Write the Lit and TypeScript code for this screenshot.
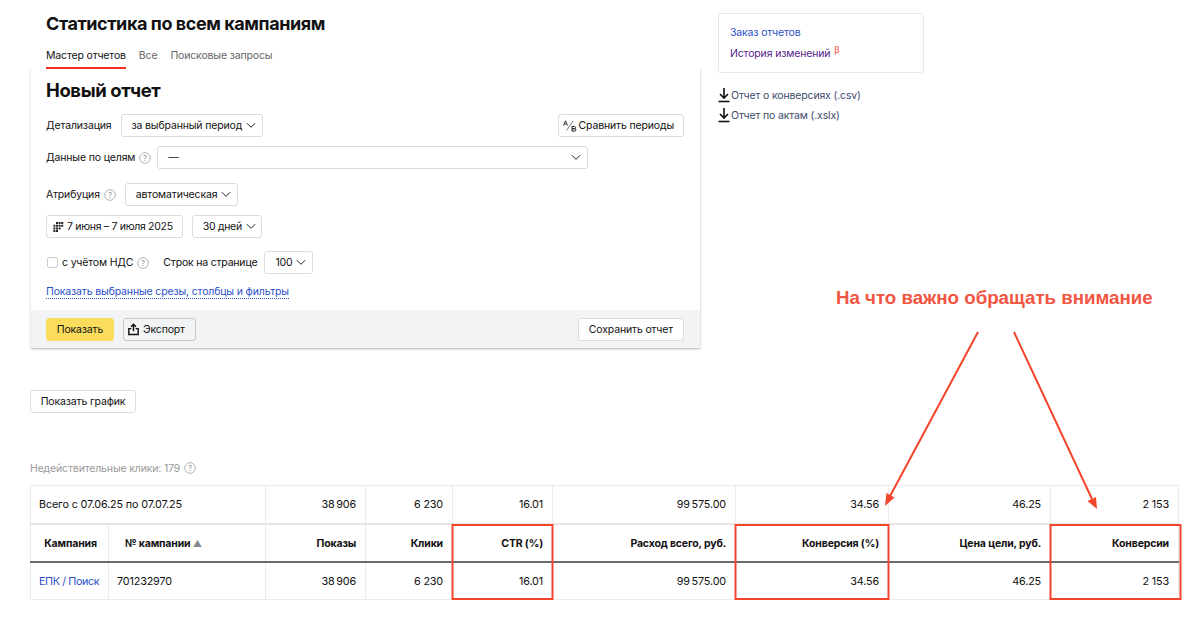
import { LitElement, html, css, svg } from "lit";
import { customElement } from "lit/decorators.js";

const chevron = html`<svg class="chev" viewBox="0 0 12 8" width="10" height="7"><path d="M1 1.2l5 5 5-5" fill="none" stroke="#222" stroke-width="1.2"/></svg>`;
const help = html`<svg class="help" viewBox="0 0 12 12" width="12" height="12"><circle cx="6" cy="6" r="5.3" fill="none" stroke="#aaa" stroke-width=".9"/><text x="6" y="8.7" text-anchor="middle" font-size="8" fill="#999" font-family="Inter, sans-serif">?</text></svg>`;
const download = html`<svg class="dl" viewBox="0 0 12 15" width="12" height="15"><path d="M6 0v10M2 6l4 4 4-4" fill="none" stroke="#111" stroke-width="1.6"/><path d="M.5 13.500h11" stroke="#111" stroke-width="1.600"/></svg>`;

const marks = [
  [452.5, 525, 100, 74],
  [735.5, 525, 153, 74],
  [1050.5, 525, 130, 74],
];

@customElement("app-root")
export class AppRoot extends LitElement {
  static styles = css`
    :host {
      display: block;
      position: relative;
      height: 617px;
      overflow: hidden;
      background: #fff;
      color: #111;
      font-family: Inter, "Liberation Sans", sans-serif;
      font-size: 10.5px;
      letter-spacing: -0.15px;
    }
    .top {
      display: flex;
      align-items: flex-start;
      padding-left: 30px;
      gap: 17px;
    }
    .main {
      width: 671px;
    }
    h1 {
      margin: 0;
      padding: 13px 0 0 16px;
      font-size: 18px;
      line-height: 22px;
      font-weight: 700;
      letter-spacing: -0.43px;
    }
    .tabs {
      display: flex;
      gap: 13px;
      padding: 14px 0 0 16px;
      height: 34px;
      box-sizing: border-box;
      color: #666;
    }
    .tab {
      line-height: 14px;
    }
    .tab.on {
      color: #111;
      height: 20px;
      border-bottom: 2px solid #f02e1c;
      box-sizing: border-box;
    }
    .panel {
      border-left: 1px solid #eee;
      border-right: 1px solid #e6e6e6;
      border-bottom: 1px solid #ccc;
      border-radius: 0 0 3px 3px;
      box-shadow: 0 1px 2px rgba(0, 0, 0, 0.12);
      height: 280px;
      box-sizing: border-box;
      display: flex;
      flex-direction: column;
    }
    .form {
      flex: 1;
      padding: 10px 16px 0 15px;
    }
    h2 {
      margin: 0 0 12px;
      font-size: 18.5px;
      line-height: 23px;
      font-weight: 700;
      letter-spacing: -0.4px;
    }
    .row {
      display: flex;
      align-items: center;
      height: 23px;
    }
    .row.r2 { margin-top: 9px; }
    .row.r3 { margin-top: 14px; }
    .row.r4 { margin-top: 9px; }
    .row.r5 { margin-top: 13px; }
    .spread { justify-content: space-between; }
    .group { display: flex; align-items: center; }
    .btn {
      display: inline-flex;
      align-items: center;
      height: 23px;
      box-sizing: border-box;
      padding: 0 10px;
      border: 1px solid #dcdcdc;
      border-radius: 3px;
      background: #fff;
      white-space: nowrap;
      gap: 4px;
    }
    .btn.pick { padding-right: 6px; }
    .btn.days { padding: 0 5px 0 10px; letter-spacing: -0.3px; }
    .label { white-space: nowrap; }
    .help { margin-left: 4px; flex: none; }
    .ml8 { margin-left: 9px; }
    .ml7 { margin-left: 7px; }
    .compare { padding: 0 9px 0 4px; gap: 2px; }
    .wide {
      width: 431px;
      justify-content: space-between;
      margin-left: 6px;
    }
    .date { padding: 0 9px 0 4px; gap: 3px; margin-right: 9px; letter-spacing: -0.3px; }
    .check {
      width: 11px;
      height: 11px;
      box-sizing: border-box;
      border: 1px solid #ccc;
      border-radius: 2px;
      margin: 0 4px 0 1px;
    }
    .gap { margin-left: 14px; letter-spacing: -0.2px; }
    .more {
      margin-top: 11px;
      color: #2a50c8;
      border-bottom: 1px dotted #2a50c8;
      display: inline-block;
      line-height: 13px;
    }
    .foot {
      height: 38px;
      background: #f2f3f4;
      display: flex;
      align-items: center;
      padding: 0 16px 0 15px;
      flex: none;
    }
    .yellow {
      background: #fbdc5c;
      border-color: #fbdc5c;
      width: 68px;
      justify-content: center;
    }
    .export {
      margin-left: 9px;
      background: #f2f3f4;
      border-color: #c8c8c8;
      padding: 0 10px 0 4px;
      gap: 4px;
    }
    .save { margin-left: auto; }
    .side { width: 206px; }
    .card {
      margin-top: 13px;
      height: 60px;
      box-sizing: border-box;
      border: 1px solid #e8e8e8;
      border-radius: 3px;
      padding: 12px 11px;
      display: flex;
      flex-direction: column;
      gap: 7px;
      line-height: 14px;
    }
    .blue { color: #2a50c8; }
    .violet { color: #551a8b; }
    .beta { color: #f0503c; font-size: 9px; vertical-align: 4px; line-height: 0; margin-left: 1px; }
    .files {
      margin-top: 15px;
      display: flex;
      flex-direction: column;
      gap: 5px;
      color: #3c4a6b;
    }
    .file {
      display: flex;
      align-items: center;
      gap: 1px;
      height: 15px;
      white-space: nowrap;
    }
    .chart {
      margin: 41px 0 0 30px;
      width: 106px;
      justify-content: center;
      padding: 0;
    }
    .invalid {
      margin: 49px 0 0 30px;
      height: 23px;
      line-height: 14px;
      color: #999;
      display: flex;
      align-items: flex-start;
    }
    table {
      margin-left: 30px;
      width: 1148px;
      table-layout: fixed;
      border-collapse: collapse;
      font-size: 10.8px;
    }
    td, th {
      border: 1px solid #ebebeb;
      text-align: right;
      padding: 0 9px;
      white-space: nowrap;
      font-weight: 400;
    }
    th { font-size: 10.5px; font-weight: 700; height: 36px; border-top: 2px solid #e4e4e4; border-bottom: 2px solid #6b6b6b; }
    .total td { height: 37px; }
    .data td { height: 36px; }
    td.l { text-align: left; padding-left: 8px; }
    td.blue { letter-spacing: -0.4px; }
    th.c { text-align: center; padding: 0 0 0 2px; }
    th.id { text-align: left; padding-left: 16px; }
    td.id { padding-left: 8px; }
    .sort { color: #888; font-size: 9px; }
    .note {
      position: absolute;
      left: 836px;
      top: 288px;
      font-family: "Liberation Sans", Arial, sans-serif;
      font-size: 18.7px;
      font-weight: 700;
      line-height: 20px;
      letter-spacing: 0;
      color: #f25542;
      white-space: nowrap;
    }
    .over {
      position: absolute;
      inset: 0;
      pointer-events: none;
    }
  `;

  render() {
    return html`
      <div class="top">
        <div class="main">
          <h1>Статистика по всем кампаниям</h1>
          <div class="tabs">
            <span class="tab on">Мастер отчетов</span>
            <span class="tab">Все</span>
            <span class="tab">Поисковые запросы</span>
          </div>
          <div class="panel">
            <div class="form">
              <h2>Новый отчет</h2>
              <div class="row spread">
                <div class="group">
                  <span class="label">Детализация</span>
                  <span class="btn pick ml8">за выбранный период ${chevron}</span>
                </div>
                <span class="btn compare">
                  <svg viewBox="0 0 14 12" width="14" height="12"><path d="M3.500 10.500L10 1" stroke="#555" stroke-width=".8"/><path d="M.5 5.500L2.500.8l2 4.700M1.200 4h2.600" fill="none" stroke="#222" stroke-width=".9"/><path d="M9 6.500h2.400a1.100 1.100 0 0 1 0 2.200H9zM9 8.700h2.700a1.200 1.200 0 0 1 0 2.400H9z" fill="none" stroke="#222" stroke-width="1"/></svg>
                  Сравнить периоды
                </span>
              </div>
              <div class="row r2">
                <span class="label">Данные по целям</span>${help}
                <span class="btn pick wide"><span>—</span>${chevron}</span>
              </div>
              <div class="row r3">
                <span class="label">Атрибуция</span>${help}
                <span class="btn pick ml8">автоматическая ${chevron}</span>
              </div>
              <div class="row r4">
                <span class="btn date">
                  <svg viewBox="0 0 13 10" width="13" height="10"><path d="M5 0h2v2H5zM7.600 0h2v2h-2zM10.200 0h2v2h-2zM2.400 2.700h2v2h-2zM5 2.700h2v2H5zM7.600 2.700h2v2h-2zM10.200 2.700h2v2h-2zM2.400 5.400h2v2h-2zM5 5.400h2v2H5zM7.600 5.400h2v2h-2zM2.400 8h2v2h-2zM5 8h2v2H5z" fill="#222"/></svg>
                  7 июня – 7 июля 2025
                </span>
                <span class="btn days">30 дней ${chevron}</span>
              </div>
              <div class="row r5">
                <span class="check"></span>
                <span class="label">с учётом НДС</span>${help}
                <span class="label gap">Строк на странице</span>
                <span class="btn pick ml7">100 ${chevron}</span>
              </div>
              <span class="more">Показать выбранные срезы, столбцы и фильтры</span>
            </div>
            <div class="foot">
              <span class="btn yellow">Показать</span>
              <span class="btn export">
                <svg viewBox="0 0 13 14" width="11" height="13"><path d="M6.500 9V1M3.600 3.800l2.900-2.900 2.900 2.900" fill="none" stroke="#111" stroke-width="1.700"/><path d="M4 6H1v7h11V6H9" fill="none" stroke="#111" stroke-width="1.700"/></svg>
                Экспорт
              </span>
              <span class="btn save">Сохранить отчет</span>
            </div>
          </div>
        </div>
        <div class="side">
          <div class="card">
            <span class="blue">Заказ отчетов</span>
            <span class="violet">История изменений <span class="beta">β</span></span>
          </div>
          <div class="files">
            <span class="file">${download} Отчет о конверсиях (.csv)</span>
            <span class="file">${download} Отчет по актам (.xslx)</span>
          </div>
        </div>
      </div>

      <span class="btn chart">Показать график</span>
      <div class="invalid">Недействительные клики: 179 ${help}</div>

      <table>
        <colgroup>
          ${[78, 157, 100, 87, 100, 183, 153, 162, 128].map(
            (w) => html`<col width=${w} />`
          )}
        </colgroup>
        <tr class="total">
          <td class="l" colspan="2">Всего с 07.06.25 по 07.07.25</td>
          <td>38\u2009906</td>
          <td>6 230</td>
          <td>16.01</td>
          <td>99\u2009575.00</td>
          <td>34.56</td>
          <td>46.25</td>
          <td>2 153</td>
        </tr>
        <tr>
          <th class="c">Кампания</th>
          <th class="id">№ кампании <span class="sort">▲</span></th>
          <th>Показы</th>
          <th>Клики</th>
          <th>CTR (%)</th>
          <th>Расход всего, руб.</th>
          <th>Конверсия (%)</th>
          <th>Цена цели, руб.</th>
          <th>Конверсии</th>
        </tr>
        <tr class="data">
          <td class="l blue">ЕПК / Поиск</td>
          <td class="l id">701232970</td>
          <td>38\u2009906</td>
          <td>6 230</td>
          <td>16.01</td>
          <td>99\u2009575.00</td>
          <td>34.56</td>
          <td>46.25</td>
          <td>2 153</td>
        </tr>
      </table>

      <div class="note">На что важно обращать внимание</div>
      <svg class="over" viewBox="0 0 1200 617" width="1200" height="617">
        ${marks.map(
          ([x, y, w, h]) =>
            svg`<rect x=${x} y=${y} width=${w} height=${h} fill="none" stroke="#f2452b" stroke-width="2"/>`
        )}
        <path d="M978 332L889 498" stroke="#f2452b" stroke-width="2" fill="none"/>
        <path d="M885 506l1.500-13 8 4.500z" fill="#f2452b"/>
        <path d="M1014 332L1092 499" stroke="#f2452b" stroke-width="2" fill="none"/>
        <path d="M1097 509l-9.500-8 8.500-4z" fill="#f2452b"/>
      </svg>
    `;
  }
}
